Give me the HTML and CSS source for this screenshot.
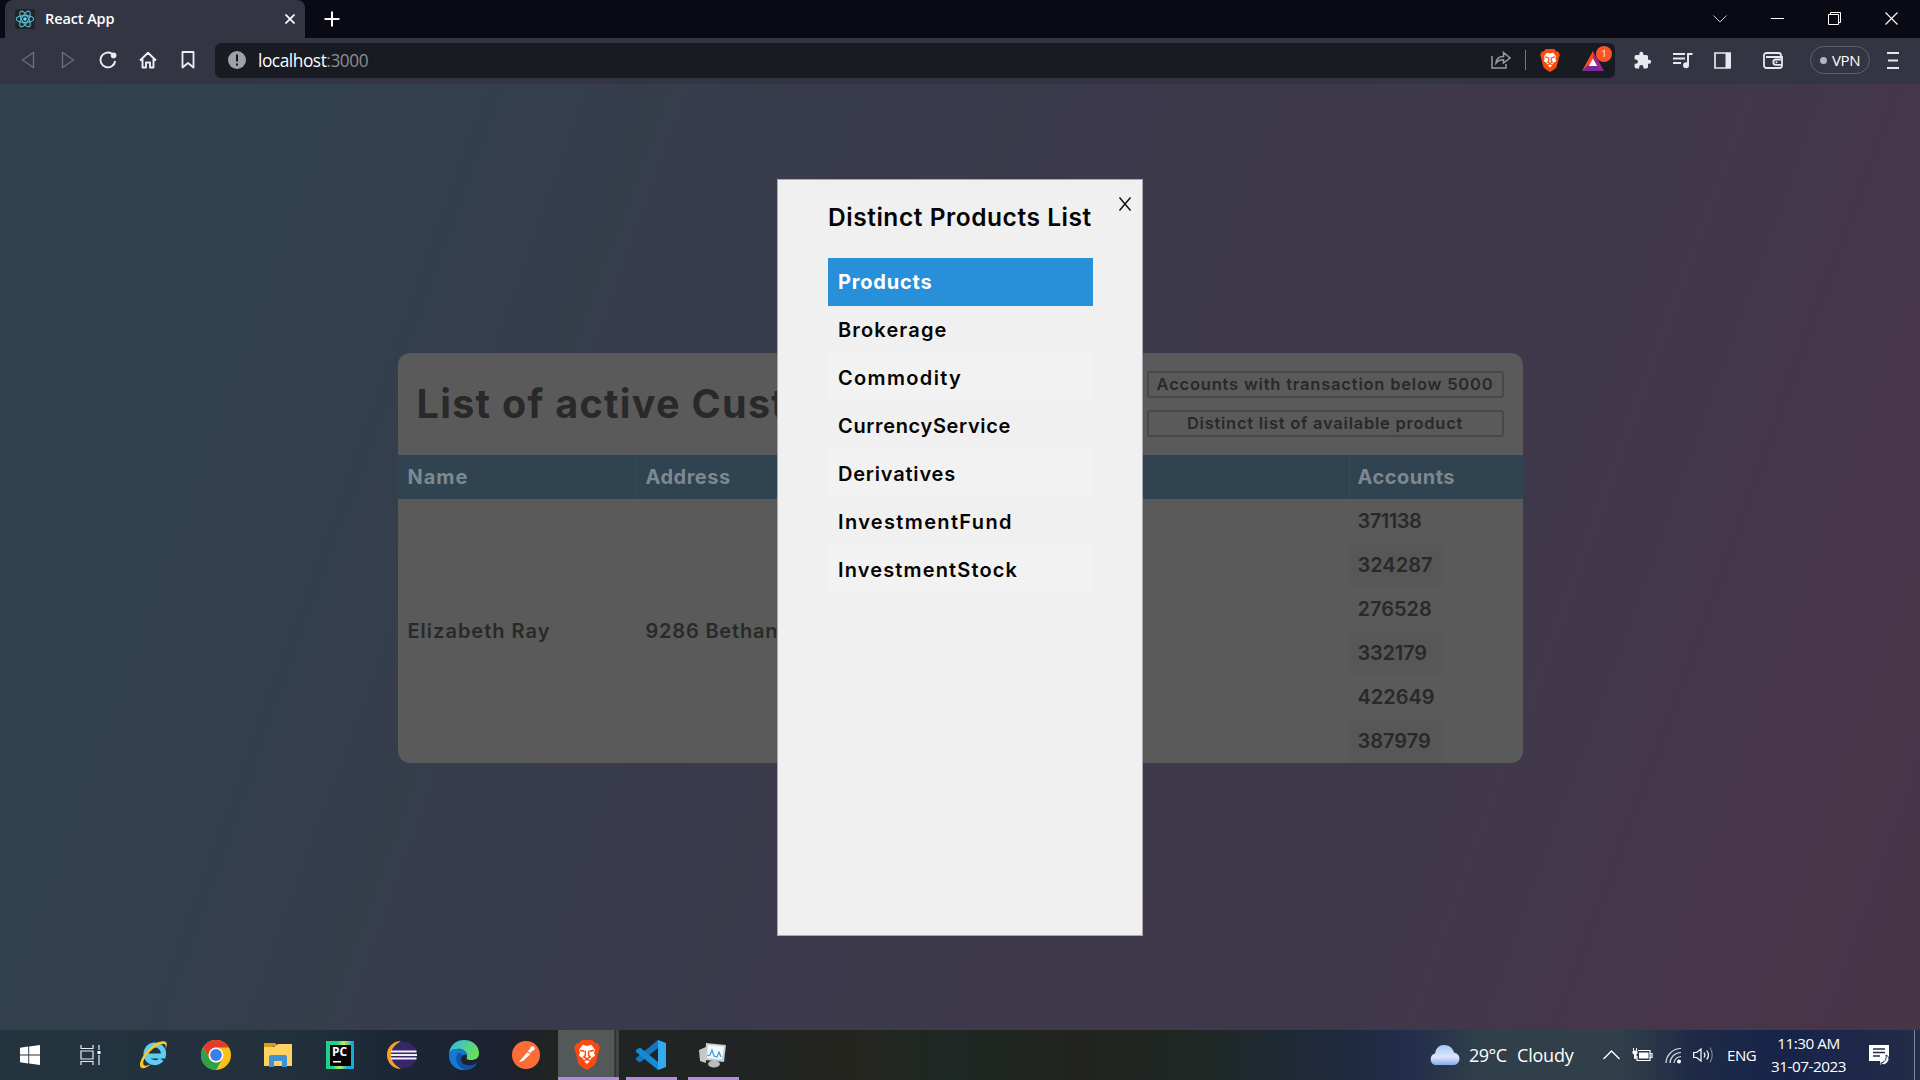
FILE: index.html
```
<!DOCTYPE html>
<html lang="en">
<head>
<meta charset="utf-8">
<title>React App</title>
<link rel="stylesheet" href="styles.css">
</head>
<body>
<svg class="defs" width="0" height="0">
  <defs>
    <symbol id="lion" viewBox="0 0 24 28">
      <path fill="#fb4a10" d="M7 0h10l3 3 2 0 2 4-1 3-3 12q-1 2-8 6-7-4-8-6L1 10 0 7l2-4 2 0z"/>
      <path fill="#fff" d="M8 4.500l4 1 4-1 3.500 4.500-1 3 1 2.500-4 3-1 2.500-2.500 2.500-2.500-2.500-1-2.500-4-3 1-2.500-1-3z"/>
      <path fill="none" stroke="#fb4a10" stroke-width="1.400" d="M5.500 9.500l4 1M18.500 9.500l-4 1M10.500 10v4.500L9 16l3 1.500 3-1.500-1.500-1.500V10M9 19.500l3-1.500 3 1.500"/>
    </symbol>
  </defs>
</svg>

<header class="tabs">
  <div class="tab">
    <svg class="react" width="20" height="20" viewBox="0 0 20 20"><rect width="20" height="20" rx="2" fill="#20252a"/><g fill="none" stroke="#58bfd8" stroke-width="1.100"><ellipse cx="10" cy="10" rx="8.800" ry="3.400"/><ellipse cx="10" cy="10" rx="8.800" ry="3.400" transform="rotate(60 10 10)"/><ellipse cx="10" cy="10" rx="8.800" ry="3.400" transform="rotate(120 10 10)"/></g><circle cx="10" cy="10" r="1.800" fill="#61dafb"/></svg>
    <span class="tab-title">React App</span>
    <svg width="10" height="10" viewBox="0 0 10 10"><path d="M.5.500l9 9M9.500.500l-9 9" stroke="#fff" stroke-width="1.700"/></svg>
  </div>
  <svg class="plus" width="16" height="16" viewBox="0 0 16 16"><path d="M8 .5v15M.5 8h15" stroke="#fff" stroke-width="2"/></svg>
  <div class="window-controls">
    <svg width="14" height="8" viewBox="0 0 14 8"><path d="M.5.500L7 7 13.500.500" fill="none" stroke="#c8c8cc"/></svg>
    <svg width="13" height="13" viewBox="0 0 13 13"><path d="M0 6.500h13" stroke="#fff"/></svg>
    <svg width="13" height="13" viewBox="0 0 13 13"><path d="M.5 2.500h10v10h-10zM2.500 2.500v-2h10v10h-2" fill="none" stroke="#fff"/></svg>
    <svg width="13" height="13" viewBox="0 0 13 13"><path d="M.5.500l12 12M12.500.500l-12 12" stroke="#fff" stroke-width="1.100"/></svg>
  </div>
</header>

<nav class="toolbar">
  <div class="nav-icons">
    <svg width="20" height="20" viewBox="0 0 20 20"><path d="M15.500 2.500v15L4.500 10z" fill="none" stroke="#6c6e7c" stroke-width="1.400" stroke-linejoin="round"/></svg>
    <svg width="20" height="20" viewBox="0 0 20 20"><path d="M4.500 2.500v15L15.500 10z" fill="none" stroke="#6c6e7c" stroke-width="1.400" stroke-linejoin="round"/></svg>
    <svg width="20" height="20" viewBox="0 0 20 20"><path d="M14 3.800A7.400 7.400 0 1 0 17.200 11" fill="none" stroke="#eeeef2" stroke-width="1.900"/><circle cx="15.600" cy="5.400" r="2.800" fill="#eeeef2"/></svg>
    <svg width="20" height="20" viewBox="0 0 20 20"><path d="M2 10.500L10 2.800l8 7.700M4.500 9v8.500H8v-5h4v5h3.500V9" fill="none" stroke="#eeeef2" stroke-width="1.900" stroke-linejoin="round"/></svg>
    <svg width="20" height="20" viewBox="0 0 20 20"><path d="M4.500 2h11v15.500L10 13l-5.500 4.500z" fill="none" stroke="#eeeef2" stroke-width="1.800" stroke-linejoin="round"/></svg>
  </div>
  <div class="address">
    <svg width="18" height="18" viewBox="0 0 18 18"><circle cx="9" cy="9" r="9" fill="#9fa1a9"/><path d="M9 3.500v7M9 12.500v2" stroke="#181b22" stroke-width="2"/></svg>
    <span class="url">localhost<span class="port">:3000</span></span>
    <svg class="share" width="20" height="18" viewBox="0 0 20 18"><path d="M1 5v12h14v-4M5 12c.5-5 3-6.500 7.500-6.500V1.500L19 7l-6.500 5V8.800C9 8.800 7 9.500 5 12z" fill="none" stroke="#989aa1" stroke-width="1.500"/></svg>
    <span class="divider"></span>
    <svg class="shield" width="20" height="23"><use href="#lion"/></svg>
    <div class="rewards">
      <svg width="22" height="20" viewBox="0 0 22 20"><path d="M11 0L0 20l11-7z" fill="#ff4a24"/><path d="M0 20h22l-5-6H6z" fill="#7a2aa0"/><path d="M11 0l11 20-5-3-6-8z" fill="#a22782"/><path d="M11 7.500l4.200 7.500H6.800z" fill="#fff"/></svg>
      <span class="count">1</span>
    </div>
  </div>
  <svg class="puzzle" width="19" height="19" viewBox="0 0 24 24"><path fill="#e8e8ee" d="M20.500 11H19V7a2 2 0 0 0-2-2h-4V3.500a2.500 2.500 0 0 0-5 0V5H4a2 2 0 0 0-2 2v3.800h1.500a2.700 2.700 0 0 1 0 5.400H2V20a2 2 0 0 0 2 2h3.800v-1.500a2.700 2.700 0 0 1 5.400 0V22H17a2 2 0 0 0 2-2v-4h1.500a2.500 2.500 0 0 0 0-5z"/></svg>
  <svg class="music" width="20" height="17" viewBox="0 0 20 17"><path d="M0 2h12M0 6.500h12M0 11h8" stroke="#e8e8ee" stroke-width="1.800"/><path d="M15 13V1.900h4.500" fill="none" stroke="#e8e8ee" stroke-width="2"/><circle cx="13" cy="13.200" r="3" fill="#e8e8ee"/></svg>
  <svg class="panel" width="17" height="17" viewBox="0 0 17 17"><path d="M1 1h15v15H1z" fill="none" stroke="#e8e8ee" stroke-width="1.700"/><path d="M11.500 1H17v15h-5.500z" fill="#e8e8ee"/></svg>
  <svg class="wallet" width="20" height="17" viewBox="0 0 20 17"><path d="M18 5V3.500A2.500 2.500 0 0 0 15.500 1H3.500A2.500 2.500 0 0 0 1 3.500v10A2.500 2.500 0 0 0 3.500 16h13a2.500 2.500 0 0 0 2.500-2.500V5H3M19 7.500h-6a2.700 2.700 0 0 0 0 5.400h6" fill="none" stroke="#e8e8ee" stroke-width="1.800"/><circle cx="13.500" cy="10.200" r="1" fill="#e8e8ee"/></svg>
  <div class="vpn"><span class="dot"></span>VPN</div>
  <svg class="menu" width="12" height="17" viewBox="0 0 12 17"><path d="M0 1h12M1 8.500h10M0 16h12" stroke="#e8e8ee" stroke-width="1.900"/></svg>
</nav>

<main class="page">
  <section class="card">
    <div class="card-head">
      <h1>List of active Cust</h1>
      <div class="actions">
        <div class="action below">Accounts with transaction below 5000</div>
        <div class="action distinct">Distinct list of available product</div>
      </div>
    </div>
    <div class="row table-head">
      <div class="name">Name</div>
      <div class="addr">Address</div>
      <div class="acc">Accounts</div>
    </div>
    <div class="row table-body">
      <div class="name">Elizabeth Ray</div>
      <div class="addr">9286 Bethan</div>
      <div class="accounts">
        <div class="n1">371138</div>
        <div class="alt">324287</div>
        <div>276528</div>
        <div class="alt n4">332179</div>
        <div>422649</div>
        <div class="alt">387979</div>
      </div>
    </div>
  </section>
  <aside class="modal">
    <svg class="close" width="14" height="14" viewBox="0 0 14 14"><path d="M1.500 .500l11 13M12.500 .500l-11 13" stroke="#111" stroke-width="1.500"/></svg>
    <h2>Distinct Products List</h2>
    <div class="products">
      <div class="products-head">Products</div>
      <div class="wide">Brokerage</div>
      <div class="shade wider">Commodity</div>
      <div class="tight">CurrencyService</div>
      <div class="shade">Derivatives</div>
      <div class="wider">InvestmentFund</div>
      <div class="shade wide">InvestmentStock</div>
    </div>
  </aside>
</main>

<footer class="taskbar">
  <div class="task start"><svg width="20" height="20" viewBox="0 0 20 20"><path fill="#fff" d="M0 2.800l8.300-1.200v7.900H0zM9.200 1.400L20 0v9.500H9.200zM0 10.500h8.300v7.900L0 17.200zM9.200 10.500H20V20L9.200 18.600z"/></svg></div>
  <div class="task view"><svg width="22" height="20" viewBox="0 0 22 20"><path d="M1 0v3.500h12V0M1 20v-3.500h12V20M1 6h12v8H1zM19 0v5M19 10v10" fill="none" stroke="#e8edf0" stroke-width="1.200"/><path d="M17.500 6h3v3h-3z" fill="#fff"/></svg></div>
  <div class="task"><svg width="30" height="30" viewBox="0 0 30 30"><path d="M22.500 19.500A8.800 8.800 0 1 1 24.300 16H9.500" fill="none" stroke="#5ecdf5" stroke-width="5"/><path d="M1.500 27C-2 21 14-1 26 1.500c3 1 2 5 0 8 1-3 1-5-1-5.500C17 3 2 19 4.500 24.500 6 27 10 25 12 24 7 28.500 3 29.500 1.500 27z" fill="#f5c92e"/></svg></div>
  <div class="task"><svg width="30" height="30" viewBox="0 0 30 30"><circle cx="15" cy="15" r="15" fill="#fbc116"/><path d="M2 7.500A15 15 0 0 1 28 7.500H15a7.500 7.500 0 0 0-6.500 11z" fill="#e33b2e"/><path d="M2 7.500A15 15 0 0 0 15 30l6.500-11.200a7.500 7.500 0 0 1-13 0z" fill="#2ba24c"/><circle cx="15" cy="15" r="7.400" fill="#fff"/><circle cx="15" cy="15" r="5.900" fill="#3b7ded"/></svg></div>
  <div class="task"><svg width="28" height="24" viewBox="0 0 28 24"><path d="M0 0h11l3 3h-2L0 6z" fill="#d99b1c"/><path d="M0 4h10l4-3h14v22H0z" fill="#ffd262"/><path d="M5 24V14q0-2 2-2h14q2 0 2 2v10h-5v-6h-8v6z" fill="#3f93d3"/></svg></div>
  <div class="task"><div class="pycharm"><span>PC</span></div></div>
  <div class="task"><svg width="30" height="28" viewBox="0 0 30 28"><path d="M14 0A14 14 0 0 0 14 28 16 16 0 0 1 14 0z" fill="#f7a32a"/><circle cx="17" cy="14" r="13" fill="#35276a"/><path d="M4 10.500h25.500M4 14h26M4 17.500h25.500" stroke="#f1eff8" stroke-width="2"/></svg></div>
  <div class="task"><svg width="30" height="30" viewBox="0 0 30 30"><defs><linearGradient id="eg" x2="1" y2=".5"><stop stop-color="#32b5ee"/><stop offset="1" stop-color="#66e05a"/></linearGradient></defs><path d="M0 14C1 4 8 0 15 0c9 0 15 6 15 13 0 5-3 7-8 7-4 0-5-1-4-3 1-5-5-9-10-8-4 0-7 2-8 5z" fill="url(#eg)"/><path d="M0 14c1-3 4-5 8-5 6 0 10 3 10 6-1-1-5-1-6 3-1 4 3 8 8 8 3 0 5-1 8-3-3 5-8 7-13 7C6 30-1 23 0 14z" fill="#1579d2"/><path d="M9 13c-4 5-1 15 8 17 5 0 9-3 11-7-5 4-16 3-16-4 0-2 1-3 2-4-2-2-4-2-5-2z" fill="#1152a5"/></svg></div>
  <div class="task"><svg width="28" height="28" viewBox="0 0 28 28"><circle cx="14" cy="14" r="14" fill="#fc6c37"/><path d="M6.500 21.500L15 11.500l3.500 1.500-7 6.500zM15.500 10.500c2-2.500 3.500-3 5-2.500l-1.500 4z" fill="#fff"/><circle cx="20.500" cy="7.500" r="2.200" fill="#fff"/></svg></div>
  <div class="task running active"><svg width="26" height="30"><use href="#lion"/></svg></div>
  <div class="task running"><svg width="30" height="30" viewBox="0 0 30 30"><path d="M22 0l8 3v24l-8 3z" fill="#35a9f0"/><path d="M22 0v8L4 22.500 0 20v-2z" fill="#1277bd"/><path d="M22 30v-8L4 7.500 0 10v2z" fill="#158bd5"/></svg></div>
  <div class="task running"><svg width="28" height="26" viewBox="0 0 28 26"><path d="M0 8l7-3v16l-6-2z" fill="#c5c7c8"/><path d="M7 1l20 2-2 17-19-2z" fill="#c9cccd"/><path d="M9 3l16 1.500-2 13-15-1.500z" fill="#f3fafd"/><path d="M8 14l3-1 2-5 2 6 3 1 2-5 2 5" fill="none" stroke="#3b9bd8" stroke-width="1.200"/><ellipse cx="15" cy="22" rx="6" ry="3.500" fill="#b8bbbd"/></svg></div>

  <div class="tray">
    <svg class="cloud" width="31" height="20" viewBox="0 0 31 20"><defs><linearGradient id="cl" x2="0" y2="1"><stop stop-color="#a9c8fa"/><stop offset=".6" stop-color="#dbe6fc"/><stop offset="1" stop-color="#87a9ec"/></linearGradient></defs><path d="M6 20a6 6 0 0 1 0-11.500C7 3 10 0 15 0s9 3 10 7.500A6.300 6.300 0 0 1 25 20z" fill="url(#cl)"/></svg>
    <span class="temp">29°C</span><span class="sky">Cloudy</span>
    <svg class="chev" width="17" height="10" viewBox="0 0 17 10"><path d="M.5 9L8.500 1l8 8" fill="none" stroke="#fff" stroke-width="1.400"/></svg>
    <svg class="battery" width="21" height="14" viewBox="0 0 21 14"><path d="M6 2.500h12v10H5V8M18.500 5.500H20v4h-1.500" fill="none" stroke="#fff" stroke-width="1.200"/><path d="M7 4.500h9.500v6H7z" fill="#fff"/><path d="M1.500 0v2.500M4.500 0v2.500M1 3h4v2.500L4 6.500v4H2.500v-4L1 5.500z" fill="#fff" stroke="#fff"/></svg>
    <svg class="wifi" width="17" height="17" viewBox="0 0 17 17"><g fill="none" stroke="#d4d9e6" stroke-width="1.200"><path d="M1 16A15 15 0 0 1 16 1.500M5 16A11 11 0 0 1 16 5.500M9 16a7 7 0 0 1 7-6.500"/></g><circle cx="14" cy="14.500" r="2" fill="#fff"/></svg>
    <svg class="sound" width="21" height="18" viewBox="0 0 21 18"><path d="M.7 6.500h3L8 3v12l-4.300-3.500h-3zM11 6.500q2 2.500 0 5M13.700 4.500q3.500 4.500 0 9" fill="none" stroke="#fff" stroke-width="1.200"/><path d="M17 1.500q4.500 7.500 0 15" fill="none" stroke="#77809a" stroke-width="1.200"/></svg>
    <span class="lang">ENG</span>
    <div class="clock"><span class="time">11:30 AM</span><span class="date">31-07-2023</span></div>
    <svg class="notes" width="21" height="21" viewBox="0 0 21 21"><path d="M0 0h20v16h-5l-4 4v-4H0z" fill="#fff"/><path d="M4 4h12M4 7.500h12M4 11h7" stroke="#202b4a" stroke-width="1.300"/><path d="M17 10c3 1 4 5 1 8-2 2-5 2-6.500 0 4 0 6.500-4 5.500-8z" fill="#fff" stroke="#202b4a"/></svg>
    <span class="edge"></span>
  </div>
</footer>
</body>
</html>
```
FILE: styles.css
```
* { box-sizing: border-box; }
body { margin: 0; width: 1920px; height: 1080px; overflow: hidden; display: flex; flex-direction: column; font-family: "Open Sans", "Noto Sans", sans-serif; color: #fff; }
svg { display: block; flex: none; }
.defs { position: absolute; }

.tabs { height: 38px; flex: none; background: #0a0a14; display: flex; align-items: center; padding-left: 5px; }
.tab { width: 300px; height: 38px; background: #333542; border-radius: 8px 8px 0 0; display: flex; align-items: center; padding: 0 10px; }
.tab-title { font-size: 14.500px; font-weight: 600; margin-left: 10px; flex: 1; letter-spacing: -.1px; padding-bottom: 1px; }
.plus { margin-left: 19px; }
.window-controls { margin-left: auto; display: flex; align-items: center; gap: 44px; padding: 0 22px 1px 0; }

.toolbar { height: 46px; flex: none; background: #333542; display: flex; align-items: center; padding-bottom: 2px; }
.nav-icons { display: flex; gap: 20px; padding-left: 18px; width: 215px; }
.address { width: 1400px; height: 35px; background: #181b22; border-radius: 6px; display: flex; align-items: center; padding-left: 13px; }
.url { font-size: 17.300px; margin-left: 12px; letter-spacing: -.45px; }
.port { color: #8b8d94; }
.share { margin-left: auto; }
.divider { width: 1px; height: 20px; background: #777982; margin-left: 14px; }
.shield { margin-left: 14px; }
.rewards { position: relative; margin: 0 11px 0 22px; padding-top: 1px; }
.count { position: absolute; left: 14px; top: -4px; width: 16px; height: 16px; border-radius: 50%; background: #fb542b; font-size: 9px; line-height: 16px; text-align: center; }
.puzzle { margin-left: 18px; }
.music { margin-left: 21px; }
.panel { margin-left: 21px; }
.wallet { margin-left: 32px; }
.vpn { margin-left: 27px; width: 60px; height: 28px; border: 1px solid #5d5f6d; border-radius: 14px; display: flex; align-items: center; justify-content: center; gap: 5px; font-size: 15px; letter-spacing: -.4px; }
.dot { width: 7px; height: 7px; border-radius: 50%; background: #b4b4c0; }
.menu { margin-left: 17px; }

.page { height: 946px; flex: none; position: relative; display: flex; justify-content: center; align-items: center; background: linear-gradient(110deg, #30424d 0%, #32404d 16%, #383b4b 38%, #3c394b 52%, #40384a 76%, #47364a 88%, #483447 100%); font-family: Inter, sans-serif; font-weight: 600; color: #292929; }
.card { width: 1125px; height: 410px; margin-top: 1px; border-radius: 12px; background: #5a5a5a; overflow: hidden; }
.card-head { height: 102px; display: flex; justify-content: space-between; padding: 18px 19px 0 19px; }
h1 { margin: 13px 0 0; font-size: 39.500px; line-height: 40px; letter-spacing: 1.300px; font-weight: 650; white-space: nowrap; }
.actions { width: 357px; display: flex; flex-direction: column; gap: 12px; }
.action { height: 27px; border: 2px solid #484848; border-radius: 3px; font-size: 16.500px; line-height: 23px; text-align: center; white-space: nowrap; }
.below { letter-spacing: .8px; }
.distinct { letter-spacing: .75px; }
.row { display: flex; font-size: 20px; letter-spacing: .8px; }
.row > div { padding: 0 10px; }
.row .name { width: 238px; letter-spacing: 1px; }
.row .addr { width: 713px; }
.table-head { height: 44px; background: #2f4351; color: #7e8890; align-items: stretch; line-height: 44px; font-weight: 700; }
.table-head .addr, .table-head .acc { border-left: 1px solid #364b5a; padding-left: 9px; letter-spacing: .5px; }
.table-head .acc { width: 174px; padding-left: 8px; }
.table-body { height: 264px; align-items: center; }
.row .accounts { width: 174px; padding: 0; line-height: 44px; }
.accounts div { width: 94px; height: 44px; padding-left: 9px; letter-spacing: 0; }
.accounts .n1 { letter-spacing: -.5px; }
.accounts .n4 { letter-spacing: -.2px; }
.alt { background: #575757; }

.modal { position: absolute; left: 777px; top: 95px; width: 366px; height: 757px; background: #f0f0f0; border: 1px solid #aaa9b1; color: #050505; padding: 24px 49px 0 50px; }
.close { position: absolute; right: 10px; top: 17px; }
h2 { margin: 0 0 27px; font-size: 24.500px; line-height: 27px; font-weight: 600; white-space: nowrap; letter-spacing: .55px; }
.products { font-size: 20px; line-height: 48px; letter-spacing: .8px; }
.products div { height: 48px; padding-left: 10px; }
.products .products-head { background: #288fd9; color: #fff; font-weight: 700; }
.products .shade { background: #f2f2f2; }
.wide { letter-spacing: 1.150px; }
.wider { letter-spacing: 1.350px; }
.tight { letter-spacing: .65px; }

.taskbar { height: 50px; flex: none; display: flex; background: linear-gradient(90deg, #23343f 0, #22303c 300px, #1b2635 400px, #1d2030 500px, #202521 560px, #202424 740px, #25251f 850px, #1e2824 950px, #22231f 1080px, #1f2825 1200px, #1f2a40 1350px, #222e4b 1410px, #303f4a 1480px, #303f4a 1620px, #1d2946 1700px, #17244a 1790px, #232c48 1920px); }
.task { width: 62px; display: flex; align-items: center; justify-content: center; flex: none; }
.start { width: 60px; }
.view { width: 63px; padding-right: 2px; }
.running { margin: 0 5.500px; width: 51px; border-bottom: 3px solid #b18cd9; padding-top: 3px; }
.active { width: 61px; margin: 0 1px 0 1px; background: linear-gradient(90deg, #525958 56px, #222 57px, #404645 58px); padding-right: 3px; }
.pycharm { width: 28px; height: 28px; padding: 4px; background: linear-gradient(100deg, #21cf8d 35%, #c6ec54 55%, #15a9e0 80%); }
.pycharm span { display: block; width: 21px; height: 21px; font: 700 12px/14px "Open Sans", sans-serif; padding-left: 2px; background: linear-gradient(#fff, #fff) 3px 16px / 8px 1.500px no-repeat #050505; }

.tray { margin-left: auto; display: flex; align-items: center; }
.temp { font-size: 18px; margin-left: 9px; width: 48px; letter-spacing: -.5px; white-space: nowrap; }
.sky { font-size: 18px; width: 86px; letter-spacing: -.2px; }
.battery { margin-left: 12px; }
.wifi { margin-left: 12px; }
.sound { margin-left: 11px; }
.lang { font-size: 15px; margin-left: 13px; width: 44px; letter-spacing: -.4px; }
.clock { width: 75px; display: flex; flex-direction: column; align-items: center; font-size: 15.300px; line-height: 23px; white-space: nowrap; letter-spacing: -.5px; }
.notes { margin-left: 23px; }
.edge { width: 1px; height: 50px; background: #7f8698; margin: 0 5px 0 24px; }
```
